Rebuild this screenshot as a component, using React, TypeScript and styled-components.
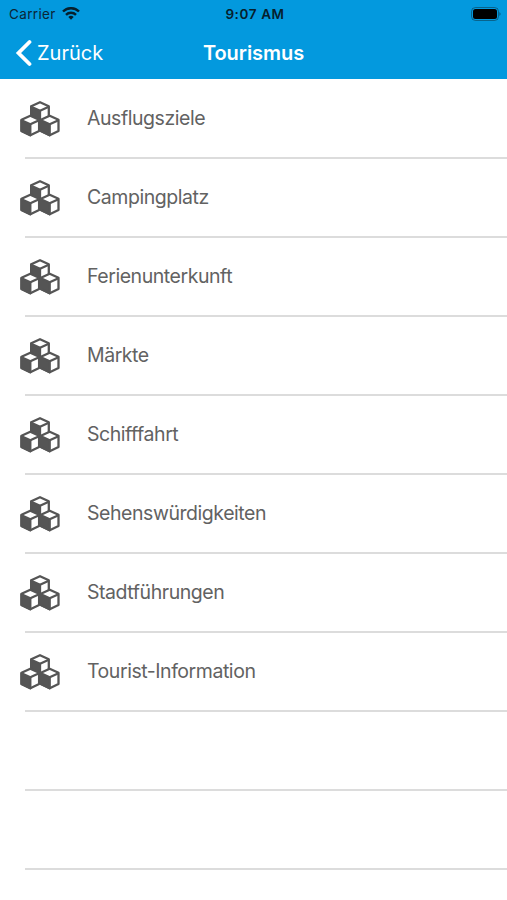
import React from "react";
import styled, { createGlobalStyle } from "styled-components";

const Global = createGlobalStyle`
  * { box-sizing: border-box; }
  body { margin: 0; background: #fff; font-family: Inter, sans-serif; }
`;
const Screen = styled.main`
  width: 507px; height: 900px; overflow: hidden; background: #fff;
`;
const Header = styled.header`
  height: 79px; background: #0399de;
`;
const StatusBar = styled.div`
  height: 27px; display: grid; grid-template-columns: 1fr auto 1fr;
  align-items: center; padding: 0 6px 0 9px; color: #0b2636; font-size: 13.5px;
`;
const Carrier = styled.div`
  display: flex; align-items: center; gap: 6px; letter-spacing: .35px;
`;
const Clock = styled.time`
  font-weight: 600; letter-spacing: .6px; font-size: 13.5px; color: #06202d;
`;
const Battery = styled.svg`justify-self: end;`;
const NavBar = styled.nav`
  height: 51px; display: grid; grid-template-columns: 1fr auto 1fr;
  align-items: center; padding: 0 15px; color: #fff;
`;
const Back = styled.a`
  display: flex; align-items: center; gap: 5px; font-size: 20px;
`;
const Title = styled.h1`
  margin: 0; font-size: 20px; font-weight: 600; letter-spacing: -.05px;
`;
const List = styled.ul`margin: 0; padding: 1px 0 0; list-style: none;`;
const Row = styled.li`
  height: 79.05px; display: flex; align-items: center; padding: 0 0 3px 20px; gap: 27px;
  color: #626262; font-size: 19.5px; letter-spacing: -.45px;
  background: linear-gradient(#dcdcdc, #dcdcdc) 25px 100% / 100% 2px no-repeat;
`;
const CubeIcon = styled.svg`
  flex: none; width: 40px; height: 36px; color: #555; margin-top: 2px;
`;
const items = ["Ausflugsziele", "Campingplatz", "Ferienunterkunft", "Märkte", "Schifffahrt", "Sehenswürdigkeiten", "Stadtführungen", "Tourist-Information"];

function Cube({ x, y }: { x: number; y: number }) {
  return (
    <g transform={`translate(${x} ${y})`} stroke="currentColor" strokeWidth="2.3" strokeLinejoin="round">
      <path d="M0 0 8.8 4v11.2L0 19.5l-8.8-4.3V4z" fill="#fff" />
      <path d="M-8.8 4.5 0 8.5v11l-8.8-4.3z" fill="currentColor" />
      <path d="M0 8.5 8.8 4.5" fill="none" />
    </g>
  );
}

function Cubes() {
  return (
    <CubeIcon viewBox="0 0 40 36">
      <Cube x={20} y={1.2} /><Cube x={10.3} y={14.8} /><Cube x={29.7} y={14.8} />
    </CubeIcon>
  );
}

export default function App() {
  return (
    <Screen>
      <Global />
      <Header>
        <StatusBar>
          <Carrier>Carrier
            <svg width="18" height="13" viewBox="0 0 18 13" fill="none" stroke="#06202d" strokeWidth="2.4"><path d="M1 4.5a11.3 11.3 0 0 1 16 0M4 7.8a7 7 0 0 1 10 0" /><path d="M6.3 10a3.8 3.8 0 0 1 5.4 0L9 12.8z" fill="#06202d" stroke="none" /></svg>
          </Carrier>
          <Clock>9:07 AM</Clock>
          <Battery width="30" height="14" viewBox="0 0 30 14"><rect x=".5" y=".5" width="27" height="13" rx="4" fill="none" stroke="#111" opacity=".4" /><rect x="2" y="2" width="24" height="10" rx="2.5" /><path d="M28.5 5v4q2-2 0-4" opacity=".5" /></Battery>
        </StatusBar>
        <NavBar>
          <Back><svg width="17" height="28" viewBox="0 0 17 28" fill="none" stroke="#fff" strokeWidth="3.8" strokeLinecap="round"><path d="M14.5 3 3.5 14l11 11" /></svg>Zurück</Back>
          <Title>Tourismus</Title>
        </NavBar>
      </Header>
      <List>
        {items.map((item) => <Row key={item}><Cubes />{item}</Row>)}
        <Row /><Row />
      </List>
    </Screen>
  );
}
